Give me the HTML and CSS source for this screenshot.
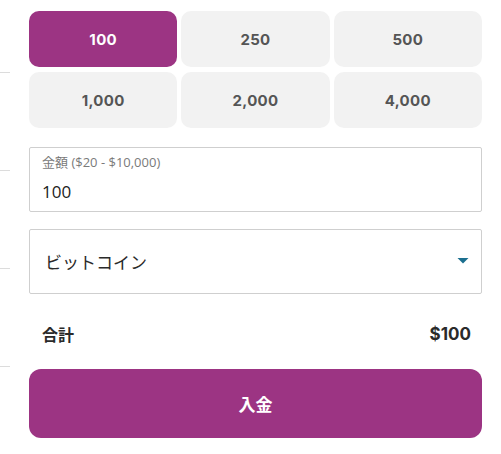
FILE: index.html
```html
<!DOCTYPE html>
<html lang="ja">
<head>
<meta charset="utf-8">
<title>入金</title>
<link rel="stylesheet" href="styles.css">
</head>
<body>
<div class="page">
  <div class="rail">
    <div class="seg seg-first"></div>
    <div class="seg"></div>
    <div class="seg"></div>
    <div class="seg"></div>
  </div>
  <main class="panel">
    <div class="amounts">
      <button class="amount active">100</button>
      <button class="amount">250</button>
      <button class="amount">500</button>
      <button class="amount">1,000</button>
      <button class="amount">2,000</button>
      <button class="amount">4,000</button>
    </div>
    <label class="field">
      <span class="field-label">金額 ($20 - $10,000)</span>
      <span class="field-value">100</span>
    </label>
    <div class="select">
      <span class="select-value">ビットコイン</span>
      <svg class="caret" width="12" height="6" viewBox="0 0 12 6"><path d="M0.5 0 H11.5 L6 5.5 Z" fill="#1b6f8f"/></svg>
    </div>
    <div class="total">
      <span class="total-label">合計</span>
      <span class="total-value">$100</span>
    </div>
    <button class="deposit">入金</button>
  </main>
</div>
</body>
</html>
```

FILE: styles.css
```css
* { box-sizing: border-box; }
html, body { margin: 0; padding: 0; background: #ffffff; }
body {
  font-family: "Open Sans", "Noto Sans CJK JP", sans-serif;
  color: #222222;
}
.page {
  display: flex;
  align-items: flex-start;
  width: 501px;
  height: 454px;
}
.rail {
  width: 10px;
  display: flex;
  flex-direction: column;
}
.seg {
  height: 98px;
  border-bottom: 1px solid #dcdcdc;
}
.seg-first { height: 73px; }
.panel {
  margin-left: 19px;
  width: 453px;
  padding-top: 11px;
  display: flex;
  flex-direction: column;
}
.amounts {
  display: grid;
  grid-template-columns: repeat(3, 1fr);
  grid-auto-rows: 56px;
  column-gap: 4px;
  row-gap: 5px;
}
.amount {
  border: none;
  border-radius: 10px;
  background: #f2f2f2;
  color: #555555;
  font-family: "Inter", sans-serif;
  font-weight: 700;
  font-size: 15px;
  letter-spacing: 0.3px;
  padding: 0;
}
.amount.active {
  background: #9c3483;
  color: #ffffff;
}
.field {
  margin-top: 19px;
  height: 65px;
  border: 1px solid #cfcfcf;
  border-radius: 2px;
  padding: 6px 12px 0;
  display: flex;
  flex-direction: column;
}
.field-label {
  font-size: 13px;
  line-height: 16px;
  color: #7a7a7a;
}
.field-value {
  margin-top: 11px;
  font-size: 17px;
  line-height: 22px;
  color: #222222;
}
.select {
  margin-top: 17px;
  height: 65px;
  border: 1px solid #cfcfcf;
  border-radius: 2px;
  padding: 0 12px 0 15px;
  display: flex;
  align-items: center;
  justify-content: space-between;
}
.select-value {
  font-family: "Noto Sans CJK JP", sans-serif;
  font-size: 17px;
  font-weight: 400;
  color: #2a2a2a;
}
.caret { margin-top: -2px; }
.total {
  height: 75px;
  padding: 4px 11px 0 13px;
  display: flex;
  align-items: center;
  justify-content: space-between;
  font-weight: 700;
  color: #2a2a2a;
}
.total-label {
  font-family: "Noto Sans CJK JP", sans-serif;
  font-size: 16px;
}
.total-value {
  font-family: "Inter", sans-serif;
  font-size: 17px;
}
.deposit {
  height: 69px;
  border: none;
  border-radius: 12px;
  background: #9c3483;
  color: #ffffff;
  font-family: "Noto Sans CJK JP", sans-serif;
  font-weight: 700;
  font-size: 17px;
  padding: 0;
}
```
